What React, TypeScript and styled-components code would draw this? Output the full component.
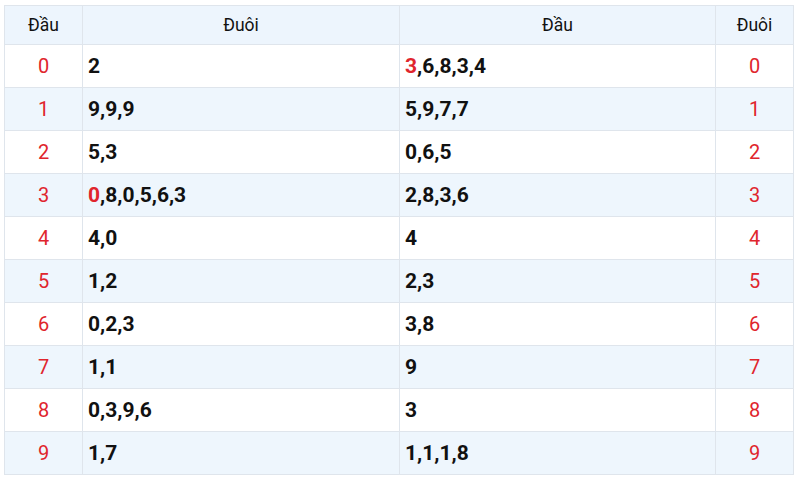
import React from 'react';
import styled, { createGlobalStyle } from 'styled-components';

const GlobalStyle = createGlobalStyle`
  body {
    margin: 0;
    background: #ffffff;
    font-family: Roboto, 'Liberation Sans', sans-serif;
  }
`;

type Cell = { red?: string; rest: string };

interface Row {
  n: number;
  tail: Cell;
  head: Cell;
}

const rows: Row[] = [
  { n: 0, tail: { rest: '2' }, head: { red: '3', rest: ',6,8,3,4' } },
  { n: 1, tail: { rest: '9,9,9' }, head: { rest: '5,9,7,7' } },
  { n: 2, tail: { rest: '5,3' }, head: { rest: '0,6,5' } },
  { n: 3, tail: { red: '0', rest: ',8,0,5,6,3' }, head: { rest: '2,8,3,6' } },
  { n: 4, tail: { rest: '4,0' }, head: { rest: '4' } },
  { n: 5, tail: { rest: '1,2' }, head: { rest: '2,3' } },
  { n: 6, tail: { rest: '0,2,3' }, head: { rest: '3,8' } },
  { n: 7, tail: { rest: '1,1' }, head: { rest: '9' } },
  { n: 8, tail: { rest: '0,3,9,6' }, head: { rest: '3' } },
  { n: 9, tail: { rest: '1,7' }, head: { rest: '1,1,1,8' } },
];

const App: React.FC = () => {
  return (
    <>
      <GlobalStyle />
      <Wrap>
        <Table>
          <colgroup>
            <col style={{ width: 78 }} />
            <col style={{ width: 317 }} />
            <col style={{ width: 316 }} />
            <col style={{ width: 78 }} />
          </colgroup>
          <thead>
            <tr>
              <Th>Đầu</Th>
              <Th>Đuôi</Th>
              <Th>Đầu</Th>
              <Th>Đuôi</Th>
            </tr>
          </thead>
          <tbody>
            {rows.map((r) => (
              <Tr key={r.n} striped={r.n % 2 === 1}>
                <Num>{r.n}</Num>
                <Values>
                  {r.tail.red && <Red>{r.tail.red}</Red>}
                  {r.tail.rest}
                </Values>
                <Values>
                  {r.head.red && <Red>{r.head.red}</Red>}
                  {r.head.rest}
                </Values>
                <Num>{r.n}</Num>
              </Tr>
            ))}
          </tbody>
        </Table>
      </Wrap>
    </>
  );
};

const Wrap = styled.div`
  padding: 5px 0 0 4px;
`;

const Table = styled.table`
  width: 789px;
  border-collapse: collapse;
  table-layout: fixed;
  border: 1px solid #dfe5ec;
`;

const Th = styled.th`
  height: 38px;
  padding: 0;
  background: #edf5fd;
  border: 1px solid #dfe5ec;
  font-weight: 400;
  font-size: 17.5px;
  color: #111;
  text-align: center;
`;

const Tr = styled.tr<{ striped: boolean }>`
  height: 43px;
  background: ${(p) => (p.striped ? '#eef6fd' : '#ffffff')};
`;

const Num = styled.td`
  padding: 0;
  border: 1px solid #dfe5ec;
  text-align: center;
  color: #e0252d;
  font-size: 20px;
`;

const Values = styled.td`
  padding: 0 0 0 5px;
  border: 1px solid #dfe5ec;
  font-weight: 700;
  font-size: 21px;
  color: #111;
`;

const Red = styled.span`
  color: #e0252d;
`;

export default App;
